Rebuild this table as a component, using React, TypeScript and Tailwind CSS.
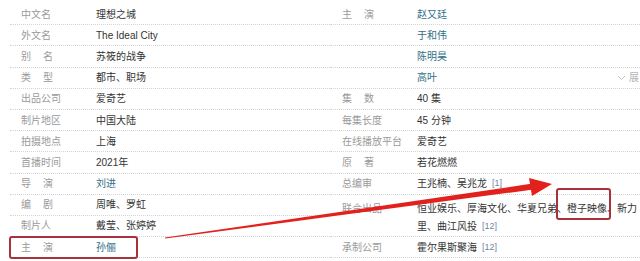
import { ReactNode } from 'react';

type Row = {
  label?: string | [string, string];
  value: ReactNode;
  link?: boolean;
  tall?: boolean;
  extra?: ReactNode;
};

const Sup = ({ n }: { n: string }) => (
  <sup className="relative -top-[1px] ml-[5px] text-[9px] text-[#7084a8]">[{n}]</sup>
);

const leftRows: Row[] = [
  { label: '中文名', value: '理想之城' },
  { label: '外文名', value: 'The Ideal City' },
  { label: ['别', '名'], value: '苏筱的战争' },
  { label: ['类', '型'], value: '都市、职场' },
  { label: '出品公司', value: '爱奇艺' },
  { label: '制片地区', value: '中国大陆' },
  { label: '拍摄地点', value: '上海' },
  { label: '首播时间', value: '2021年' },
  { label: ['导', '演'], value: '刘进', link: true },
  { label: ['编', '剧'], value: '周唯、罗虹' },
  { label: '制片人', value: '戴莹、张婷婷' },
  { label: ['主', '演'], value: '孙俪', link: true },
];

const rightRows: Row[] = [
  { label: ['主', '演'], value: '赵又廷', link: true },
  { value: '于和伟', link: true },
  { value: '陈明昊', link: true },
  {
    value: '高叶',
    link: true,
    extra: (
      <div className="ml-auto flex items-center gap-[3px] pr-[1px] whitespace-nowrap text-[#b5b5b5]">
        <svg width="9" height="6" viewBox="0 0 9 6" fill="none">
          <path d="M1 1l3.5 3.5L8 1" stroke="#c4c4c4" strokeWidth="1" />
        </svg>
        <span>展</span>
      </div>
    ),
  },
  { label: ['集', '数'], value: '40 集' },
  { label: '每集长度', value: '45 分钟' },
  { label: '在线播放平台', value: '爱奇艺' },
  { label: ['原', '著'], value: '若花燃燃' },
  {
    label: '总编审',
    value: (
      <>
        王兆楠、吴兆龙
        <Sup n="1" />
      </>
    ),
  },
  {
    label: '联合出品',
    tall: true,
    value: (
      <>
        恒业娱乐、厚海文化、华夏兄弟、橙子映像、新力
        <br />
        里、曲江风投
        <Sup n="12" />
      </>
    ),
  },
  {
    label: '承制公司',
    value: (
      <>
        霍尔果斯聚海
        <Sup n="12" />
      </>
    ),
  },
];

function Label({ label }: { label?: Row['label'] }) {
  if (!label) return null;
  if (Array.isArray(label)) {
    return (
      <span className="flex w-[32px] justify-between">
        <span>{label[0]}</span>
        <span>{label[1]}</span>
      </span>
    );
  }
  return <span>{label}</span>;
}

function InfoRow({ row, pad }: { row: Row; pad: string }) {
  return (
    <div
      className={`flex border-b border-dotted border-[#d4d4d4] ${pad} ${
        row.tall ? 'h-[42.4px] items-start pt-[5px] leading-[18px]' : 'h-[21.2px] items-center'
      }`}
    >
      <div className="w-[75px] shrink-0 text-[#9a9a9a]">
        <Label label={row.label} />
      </div>
      <div className={`whitespace-nowrap ${row.link ? 'text-[#2f6f86]' : 'text-[#333]'}`}>
        {row.value}
      </div>
      {row.extra}
    </div>
  );
}

function Annotations() {
  // tapered red arrow from the lead actor row towards the co-producer list
  return (
    <svg className="pointer-events-none absolute left-0 top-0" width="640" height="261">
      <rect x="10" y="237" width="127" height="21" rx="2" fill="none" stroke="#a8323a" strokeWidth="2" />
      <rect x="557" y="189" width="53" height="30" rx="2" fill="none" stroke="#a8323a" strokeWidth="2" />
      <polygon points="165,237.5 165.2,238.6 533.4,189.5 532.6,183.6" fill="#e3211c" />
      <polygon points="552,184 529,178 532,196" fill="#e3211c" />
    </svg>
  );
}

export default function App() {
  return (
    <div className="relative h-[261px] w-[640px] overflow-hidden bg-white font-['Liberation_Sans','Noto_Sans_CJK_SC',sans-serif] text-[10px]">
      <div className="flex pt-[4px]">
        <div className="ml-[10px] flex w-[320px] flex-col">
          {leftRows.map((r, i) => (
            <InfoRow key={i} row={r} pad="pl-[11px]" />
          ))}
        </div>
        <div className="flex flex-1 flex-col">
          {rightRows.map((r, i) => (
            <InfoRow key={i} row={r} pad="pl-[12px]" />
          ))}
        </div>
      </div>
      <Annotations />
    </div>
  );
}
